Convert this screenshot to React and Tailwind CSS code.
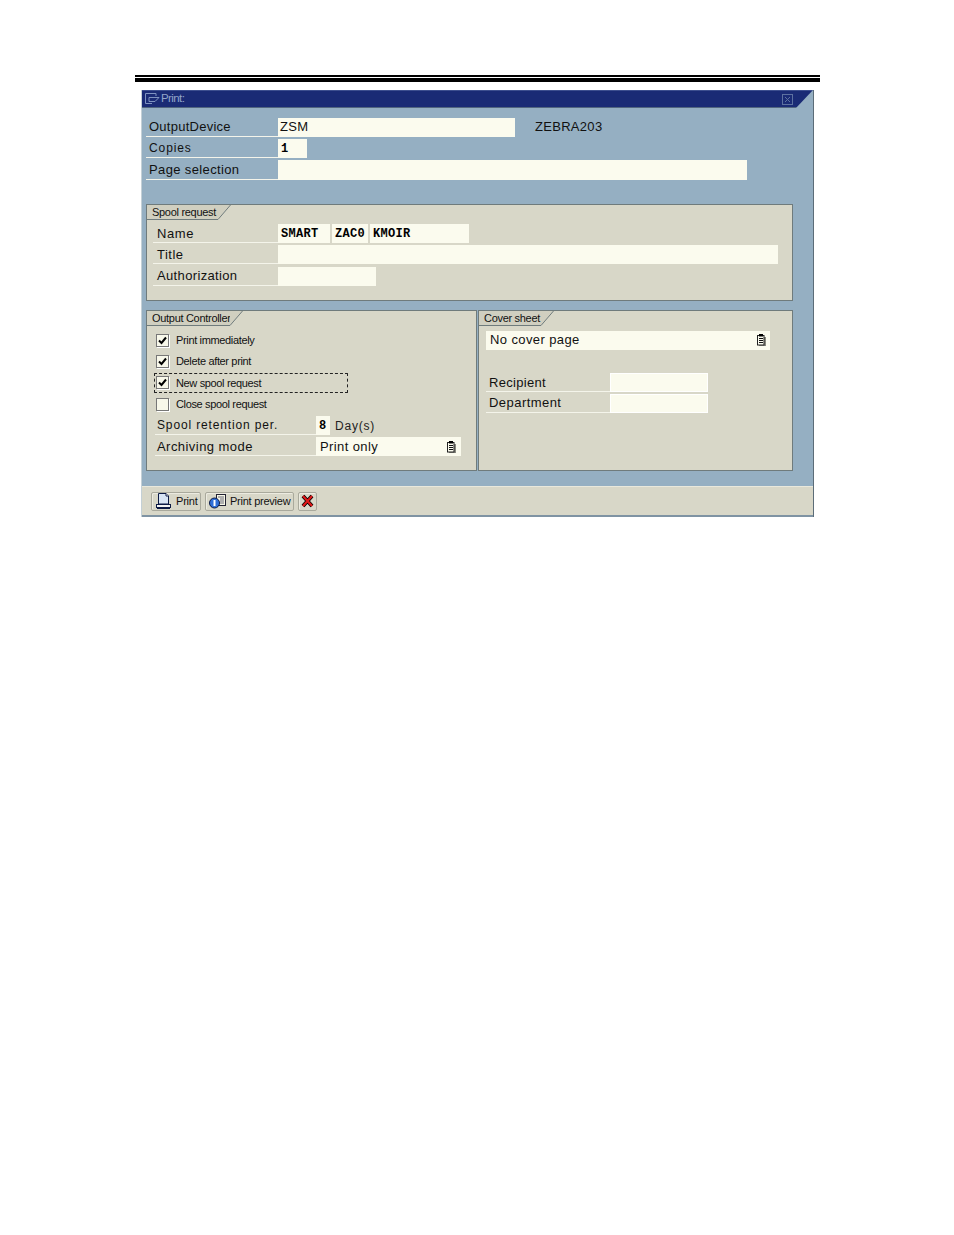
const sans = "font-['Liberation_Sans',Arial,sans-serif]";

function Label({ children, className = "w-[132px] pl-[3px]" }) {
  return (
    <div className={"flex items-center h-[19px] border-b border-[#f4f4ea] text-[13px] text-[#111] whitespace-nowrap " + className}>
      {children}
    </div>
  );
}

function Field({ className = "", children }) {
  return (
    <div className={"h-[19px] bg-[#fbfbee] flex items-center text-[13px] text-[#111] whitespace-nowrap " + className}>
      {children}
    </div>
  );
}

function Mono({ className = "", children }) {
  return (
    <div className={"h-[19px] bg-[#fbfbee] flex items-center pl-[3px] pt-[1px] font-['Liberation_Mono',monospace] font-bold text-[12px] tracking-[0.3px] text-black " + className}>
      {children}
    </div>
  );
}

function Group({ title, tabWidth, className = "", children }) {
  return (
    <div className={"relative border border-[#6f7b7c] bg-[#d8d7c8] " + className}>
      <div className="absolute left-0 top-0 h-[15px] flex items-center pl-[5px] text-[11px] tracking-[-0.3px] text-[#111] bg-[#d0cfc0] border-b border-[#6f7b7c] whitespace-nowrap" style={{ width: tabWidth }}>
        {title}
      </div>
      <svg className="absolute top-0" style={{ left: tabWidth }} width="14" height="15" viewBox="0 0 14 15">
        <path d="M0 0 H12 L0 14 Z" fill="#d0cfc0" />
        <path d="M0 14.5 L12.5 0" stroke="#6f7b7c" fill="none" />
      </svg>
      {children}
    </div>
  );
}

function Check({ checked, label, boxed }) {
  return (
    <div className={"flex items-center h-[20px] w-[194px] pl-[1px] " + (boxed ? "border border-dashed border-[#222] rounded-[1px]" : "border border-transparent")}>
      <div className="w-[13px] h-[13px] bg-[#f8f8ea] border border-[#777] shadow-[1px_1px_0_#fff] flex items-center justify-center">
        {checked && (
          <svg width="9" height="9" viewBox="0 0 9 9">
            <path d="M1 4.5 L3.5 7 L8 1.5" stroke="#000" strokeWidth="2" fill="none" />
          </svg>
        )}
      </div>
      <span className="ml-[7px] text-[11px] tracking-[-0.35px] text-[#111] whitespace-nowrap">{label}</span>
    </div>
  );
}

function ListIcon() {
  return (
    <svg width="9" height="12" viewBox="0 0 9 12">
      <rect x="2" y="3" width="7" height="9" fill="#8a8a80" />
      <rect x="0.5" y="1.5" width="6.5" height="9.5" fill="#fbfbee" stroke="#222" />
      <rect x="2" y="0" width="4" height="2.5" fill="#000" />
      <path d="M2 4.5 H6 M2 6.5 H6 M2 8.5 H6" stroke="#111" />
    </svg>
  );
}

function ToolButton({ className = "", children }) {
  return (
    <div className={"h-[19px] border border-[#a9a99c] rounded-[2px] bg-[#d8d7c8] flex items-center whitespace-nowrap shadow-[inset_1px_1px_0_#ecebe0] " + className}>
      {children}
    </div>
  );
}

export default function App() {
  return (
    <div className={"min-h-[1235px] bg-white pt-[75px] " + sans}>
      <div className="ml-[135px] w-[685px]">
        <div className="h-[2px] bg-black" />
        <div className="h-[4px] mt-[1px] bg-black" />
      </div>

      <div className="ml-[141px] mt-[8px] w-[673px] h-[427px] bg-[#95afc2] border-l border-[#c4d0d6] border-r border-r-[#5c6d78] flex flex-col">
        <div className="relative h-[18px] bg-[#1a2b75] border-t border-[#3d4f8f] border-b border-b-[#51667f] flex items-center pl-[3px] shrink-0">
          <svg width="15" height="12" viewBox="0 0 15 12">
            <path d="M0.5 0.5 H11 V3 M0.5 0.5 V10.5 H7 M4 4.5 H14 L10 8.5 H4 Z" stroke="#7f93c0" fill="none" />
          </svg>
          <span className="ml-[1px] text-[11.5px] tracking-[-0.6px] text-[#93a5c8]">Print:</span>
          <svg className="absolute right-[20px] top-[3px]" width="11" height="11" viewBox="0 0 11 11">
            <rect x="0.5" y="0.5" width="10" height="10" fill="none" stroke="#5d71a0" />
            <path d="M3 3 L8 8 M8 3 L3 8" stroke="#5d71a0" />
          </svg>
          <svg className="absolute right-0 top-[-1px]" width="17" height="18" viewBox="0 0 17 18">
            <path d="M17 0 V18 H0 Z" fill="#95afc2" />
          </svg>
        </div>

        <div className="flex-1 pt-[10px] pl-[4px] pr-[20px] flex flex-col">
          <div className="flex items-start">
            <Label><span className="tracking-[0.25px]">OutputDevice</span></Label>
            <Field className="w-[237px] pl-[2px] pb-[1px] tracking-[0.3px]">ZSM</Field>
            <div className="ml-[20px] h-[19px] pb-[1px] flex items-center text-[13px] tracking-[0.3px] text-[#111]">ZEBRA203</div>
          </div>
          <div className="flex items-start mt-[2px]">
            <Label><span className="tracking-[0.9px] text-[12px]">Copies</span></Label>
            <div className="h-[19px] w-[29px] bg-[#fbfbee] pl-[3px] flex items-center font-['Liberation_Mono',monospace] font-bold text-[12px] text-black">1</div>
          </div>
          <div className="flex items-start mt-[2px]">
            <Label className="w-[132px] pl-[3px] h-[20px]"><span className="tracking-[0.37px]">Page selection</span></Label>
            <Field className="w-[469px] !h-[20px]" />
          </div>

          <Group title="Spool request" tabWidth={71} className="mt-[24px] w-[647px] h-[97px] pt-[19px] pl-[6px]">
            <div className="flex items-start">
              <Label className="w-[125px] pl-[4px] pt-[1px]"><span className="tracking-[0.6px]">Name</span></Label>
              <Mono className="w-[52px]">SMART</Mono>
              <Mono className="w-[36px] ml-[2px]">ZAC0</Mono>
              <Mono className="w-[99px] ml-[2px]">KMOIR</Mono>
            </div>
            <div className="flex items-start mt-[2px]">
              <Label className="w-[125px] pl-[4px] pt-[1px]"><span className="tracking-[0.5px]">Title</span></Label>
              <Field className="w-[500px]" />
            </div>
            <div className="flex items-start mt-[3px]">
              <Label className="w-[125px] pl-[4px]"><span className="tracking-[0.35px]">Authorization</span></Label>
              <Field className="w-[98px]" />
            </div>
          </Group>

          <div className="flex mt-[9px] gap-px">
            <Group title="Output Controller" tabWidth={83} className="w-[331px] h-[161px] pt-[19px] pl-[7px]">
              <div className="flex flex-col gap-[1.4px]">
                <Check checked label="Print immediately" />
                <Check checked label="Delete after print" />
                <Check checked boxed label="New spool request" />
                <Check label="Close spool request" />
              </div>
              <div className="flex items-start mt-[2px] ml-[1px]">
                <Label className="w-[161px] pl-[2px]"><span className="tracking-[0.85px] text-[12px]">Spool retention per.</span></Label>
                <div className="h-[19px] w-[14px] bg-[#fbfbee] pl-[3px] flex items-center font-['Liberation_Mono',monospace] font-bold text-[12px] text-black">8</div>
                <div className="ml-[5px] h-[19px] flex items-center text-[12px] tracking-[0.8px] text-[#222]">Day(s)</div>
              </div>
              <div className="flex items-start mt-[2px] ml-[1px]">
                <Label className="w-[161px] pl-[2px] pt-[1px]"><span className="tracking-[0.45px]">Archiving mode</span></Label>
                <Field className="w-[145px] pl-[4px] pr-[5px] pt-[1px] justify-between tracking-[0.4px]">
                  <span>Print only</span>
                  <ListIcon />
                </Field>
              </div>
            </Group>

            <Group title="Cover sheet" tabWidth={62} className="w-[315px] h-[161px] pt-[20px] pl-[7px]">
              <Field className="w-[284px] pl-[4px] pr-[4px] pb-[1px] justify-between tracking-[0.4px]">
                <span>No cover page</span>
                <ListIcon />
              </Field>
              <div className="flex items-start mt-[23px]">
                <Label className="w-[124px] pl-[3px] pt-[1px]"><span className="tracking-[0.3px]">Recipient</span></Label>
                <Field className="w-[98px] border border-white" />
              </div>
              <div className="flex items-start mt-[2px]">
                <Label className="w-[124px] pl-[3px]"><span className="tracking-[0.45px]">Department</span></Label>
                <Field className="w-[98px] border border-white" />
              </div>
            </Group>
          </div>
        </div>

        <div className="h-[31px] shrink-0 bg-[#d8d7c8] border-t border-[#e9e8dc] border-b-2 border-b-[#7f93a3] flex items-center pl-[9px] gap-[4px]">
          <ToolButton className="w-[50px] pl-[4px]">
            <svg width="15" height="16" viewBox="0 0 15 16">
              <path d="M2.5 0.5 H10 L12.5 3 V11 H2.5 Z" fill="#d8e4f4" stroke="#0c1a44" />
              <path d="M10 0.5 V3 H12.5" fill="#fff" stroke="#0c1a44" />
              <rect x="0.5" y="11.5" width="14" height="3" fill="#f2f2f2" stroke="#0c1a44" />
              <path d="M1 15.5 H14" stroke="#0c1a44" />
            </svg>
            <span className="ml-[5px] text-[11px] tracking-[-0.2px] text-[#111]">Print</span>
          </ToolButton>
          <ToolButton className="w-[89px] pl-[3px]">
            <svg width="18" height="16" viewBox="0 0 18 16">
              <rect x="7.5" y="1.5" width="9" height="11" fill="#f6f6e6" stroke="#223" />
              <path d="M9 4 H15 M11 6 H15 M11 8 H15 M11 10 H15" stroke="#667" />
              <circle cx="5.5" cy="10" r="5" fill="#2f6fd8" stroke="#0c1a44" />
              <path d="M5.5 7 V13" stroke="#fff" strokeWidth="2" />
            </svg>
            <span className="ml-[3px] text-[11px] tracking-[-0.25px] text-[#111]">Print preview</span>
          </ToolButton>
          <ToolButton className="w-[19px] justify-center">
            <svg width="13" height="14" viewBox="0 0 13 14">
              <path d="M2 2 L11 12 M11 2 L2 12" stroke="#000" strokeWidth="3.8" />
              <path d="M2 2 L11 12 M11 2 L2 12" stroke="#e01818" strokeWidth="2.2" />
            </svg>
          </ToolButton>
        </div>
      </div>
    </div>
  );
}
